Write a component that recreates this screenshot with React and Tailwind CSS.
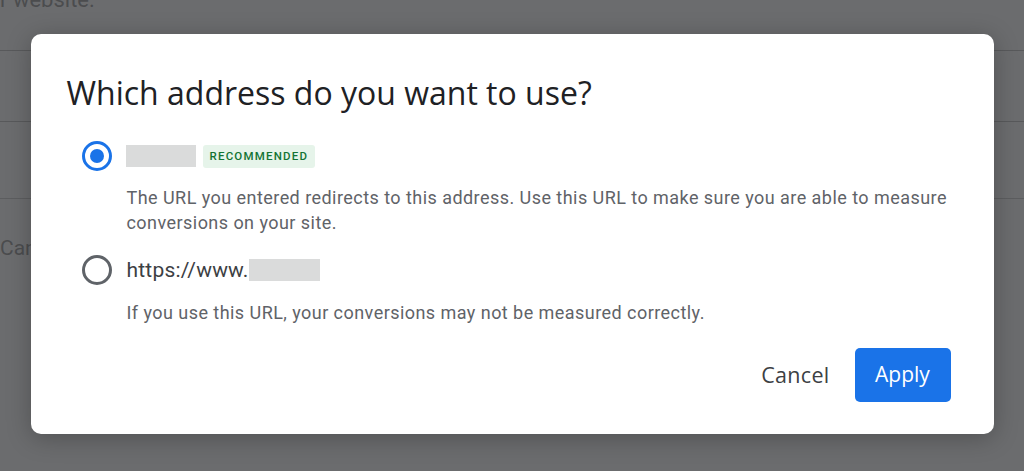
import React from "react";

function Radio({ checked }) {
  return checked ? (
    <span className="flex h-[30px] w-[30px] shrink-0 items-center justify-center rounded-full border-[3px] border-[#1a73e8]">
      <span className="h-[14px] w-[14px] rounded-full bg-[#1a73e8]" />
    </span>
  ) : (
    <span className="h-[30px] w-[30px] shrink-0 rounded-full border-[3px] border-[#5f6368]" />
  );
}

export default function App() {
  return (
    <div className="relative h-[471px] w-[1024px] overflow-hidden bg-[#6b6c6e] font-['Roboto',sans-serif]">
      {/* page behind the overlay */}
      <div className="flex flex-col">
        <p className="-mt-[14px] text-[22px] leading-[28px] text-[#4b4c4e]">r website.</p>
        <div className="mt-[36px] h-[72px] border-y border-[#58595b]" />
        <div className="mt-[76px] border-t border-[#5c5d5f]" />
        <p className="mt-[35px] text-[21px] leading-[28px] text-[#4b4c4e]">Cancel</p>
      </div>

      {/* dialog */}
      <div className="absolute inset-0 flex justify-center pt-[34px]">
        <div className="flex h-[400px] w-[963px] flex-col rounded-[10px] bg-white pl-[36px] pr-[40px] pt-[41px] shadow-[0_4px_24px_rgba(0,0,0,0.25)]">
          <h2 className="font-['Open_Sans',sans-serif] text-[32px] leading-[36px] text-[#202124]">
            Which address do you want to use?
          </h2>

          <div className="mt-[30px] flex items-center gap-[15px] pl-[15px]">
            <Radio checked />
            <div className="-ml-[1px] flex items-center gap-[7px]">
              <span className="h-[22px] w-[70px] bg-[#dadbdb]" />
              <span className="rounded-[3px] bg-[#e6f4ea] px-[7px] py-[4px] text-[11.5px] font-medium leading-[15px] tracking-[1.2px] text-[#137333]">
                RECOMMENDED
              </span>
            </div>
          </div>
          <p className="mt-[14px] pl-[60px] text-[18px] leading-[25px] tracking-[0.45px] text-[#5f6368]">
            The URL you entered redirects to this address. Use this URL to make sure you are able to measure
            conversions on your site.
          </p>

          <div className="mt-[20px] flex items-center gap-[15px] pl-[15px]">
            <Radio />
            <div className="flex items-center">
              <span className="text-[21px] leading-[26px] tracking-[0.2px] text-[#3c4043]">https://www.</span>
              <span className="h-[22px] w-[71px] bg-[#dadbdb]" />
            </div>
          </div>
          <p className="mt-[15px] pl-[60px] text-[18px] leading-[25px] tracking-[0.45px] text-[#5f6368]">
            If you use this URL, your conversions may not be measured correctly.
          </p>

          <div className="mt-[23px] flex items-center justify-end gap-[25px] pr-[3px]">
            <button className="font-['Open_Sans',sans-serif] text-[21.5px] tracking-[0.3px] text-[#3c4043]">Cancel</button>
            <button className="h-[54px] w-[96px] rounded-[5px] bg-[#1a73e8] font-['Open_Sans',sans-serif] text-[21px] font-medium text-white">
              Apply
            </button>
          </div>
        </div>
      </div>
    </div>
  );
}
